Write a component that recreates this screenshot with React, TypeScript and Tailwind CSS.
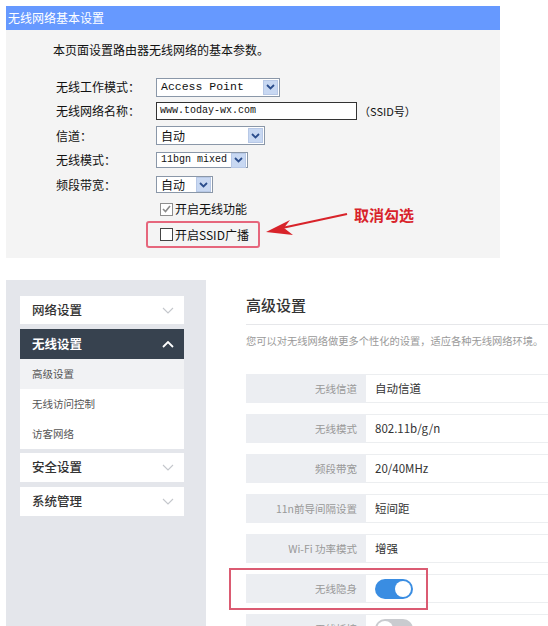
import React from "react";

const cjk = "font-['Noto_Sans_CJK_SC',sans-serif]";
const mono = "font-['Liberation_Mono','Noto_Sans_CJK_SC',monospace]";

function SelectArrow() {
  return (
    <span className="flex h-[15px] w-[15px] shrink-0 items-center justify-center border border-[#b7c8e6] bg-[#c8d8f2]">
      <svg width="9" height="6" viewBox="0 0 9 6">
        <polyline points="1,1 4.5,4.5 8,1" fill="none" stroke="#2b4d8c" strokeWidth="1.8" />
      </svg>
    </span>
  );
}

function OldSelect({ value, width, height, textClass }: { value: string; width: string; height: string; textClass: string }) {
  return (
    <div className={`${width} ${height} flex items-center justify-between border border-[#8a97a8] bg-white pl-[4px] pr-[1px]`}>
      <span className={`${textClass} whitespace-nowrap leading-none text-[#111]`}>{value}</span>
      <SelectArrow />
    </div>
  );
}

function OldCheckbox({ checked }: { checked?: boolean }) {
  return (
    <span className={`flex h-[13px] w-[13px] items-center justify-center border bg-white ${checked ? "border-[#8e8e8e]" : "border-[#444]"}`}>
      {checked && (
        <svg width="9" height="8" viewBox="0 0 9 8">
          <polyline points="1,4 3.5,6.5 8,1" fill="none" stroke="#8a8a8a" strokeWidth="1.6" />
        </svg>
      )}
    </span>
  );
}

function Chevron({ up, color }: { up?: boolean; color: string }) {
  return (
    <svg width="12" height="7" viewBox="0 0 12 7">
      <polyline points={up ? "1,6 6,1 11,6" : "1,1 6,6 11,1"} fill="none" stroke={color} strokeWidth={up ? 1.8 : 1.1} />
    </svg>
  );
}

function Toggle({ on }: { on?: boolean }) {
  return (
    <span className={`relative block h-[20px] w-[38px] rounded-full ${on ? "bg-[#3a8de2]" : "bg-[#c9cbcf]"}`}>
      <span className={`absolute top-[2px] h-[16px] w-[16px] rounded-full bg-white ${on ? "right-[2px]" : "left-[2px]"}`} />
    </span>
  );
}

const rows: { label: string; value?: string; toggle?: "on" | "off"; marked?: boolean }[] = [
  { label: "无线信道", value: "自动信道" },
  { label: "无线模式", value: "802.11b/g/n" },
  { label: "频段带宽", value: "20/40MHz" },
  { label: "11n前导间隔设置", value: "短间距" },
  { label: "Wi-Fi 功率模式", value: "增强" },
  { label: "无线隐身", toggle: "on", marked: true },
  { label: "无线桥接", toggle: "off" },
];

export default function App() {
  return (
    <div className={`relative h-[626px] w-[548px] overflow-hidden bg-white ${cjk}`}>
      {/* old style settings page */}
      <div className="pl-[6px] pt-[6px]">
        <div className="w-[494px]">
          <div className="flex h-[24px] items-center bg-[#6699ff] pl-[2px] text-[12px] text-white">无线网络基本设置</div>
          <div className="h-[228px] bg-[#f4f4f4] pt-[12px] text-[12px] text-[#111]">
            <p className="pl-[47px] leading-[16px]">本页面设置路由器无线网络的基本参数。</p>
            <div className="mt-[17px]">
              <div className="flex h-[24px] items-center pl-[50px]">
                <span className="w-[100px]">无线工作模式：</span>
                <OldSelect value="Access Point" width="w-[124px]" height="h-[19px]" textClass={`${mono} text-[11.5px]`} />
              </div>
              <div className="flex h-[24px] items-center pl-[50px]">
                <span className="w-[100px]">无线网络名称：</span>
                <div className="flex h-[18px] w-[201px] items-center border border-[#333] bg-white pl-[3px]">
                  <span className={`${mono} text-[10px] leading-none text-[#111]`}>www.today-wx.com</span>
                </div>
                <span className="ml-[2px] text-[11px]">（SSID号）</span>
              </div>
              <div className="flex h-[25px] items-center pl-[50px]">
                <span className="w-[100px]">信道：</span>
                <OldSelect value="自动" width="w-[109px]" height="h-[19px]" textClass={`${cjk} text-[12px]`} />
              </div>
              <div className="flex h-[24px] items-center pl-[50px]">
                <span className="w-[100px]">无线模式：</span>
                <OldSelect value="11bgn mixed" width="w-[92px]" height="h-[16px]" textClass={`${mono} text-[10px]`} />
              </div>
              <div className="flex h-[25px] items-center pl-[50px]">
                <span className="w-[100px]">频段带宽：</span>
                <OldSelect value="自动" width="w-[57px]" height="h-[17px]" textClass={`${cjk} text-[12px]`} />
              </div>
              <div className="flex h-[24px] items-center gap-[2px] pl-[154px]">
                <OldCheckbox checked />
                <span>开启无线功能</span>
              </div>
              <div className="ml-[140px] flex h-[27px] w-[114px] items-center gap-[2px] rounded-[3px] border-2 border-[#e6667c] pl-[12px]">
                <OldCheckbox />
                <span>开启SSID广播</span>
              </div>
            </div>
          </div>
        </div>
      </div>

      {/* annotation arrow */}
      <svg className="pointer-events-none absolute left-0 top-0" width="548" height="260" viewBox="0 0 548 260">
        <line x1="347" y1="214" x2="282" y2="228" stroke="#d8232a" strokeWidth="2.2" />
        <polygon points="266,232 290,220 284,228 293,235" fill="#d8232a" />
      </svg>
      <span className="absolute left-[354px] top-[204px] text-[15px] font-bold leading-[22px] text-[#d8232a]">取消勾选</span>

      {/* new style settings page */}
      <div className="mt-[22px] flex pl-[6px]">
        <div className="h-[346px] w-[200px] shrink-0 bg-[#e4e6eb] pl-[14px] pr-[22px] pt-[16px]">
          <div className="flex h-[28px] items-center justify-between bg-white pl-[12px] pr-[10px] text-[12.5px] font-medium text-[#333]">
            <span>网络设置</span>
            <Chevron color="#c4c7cc" />
          </div>
          <div className="mt-[5px] flex h-[30px] items-center justify-between bg-[#37424f] pl-[12px] pr-[10px] text-[12.5px] font-bold text-white">
            <span>无线设置</span>
            <Chevron up color="#ffffff" />
          </div>
          <div className="bg-white text-[10.5px] text-[#555]">
            <div className="flex h-[30px] items-center bg-[#f1f2f4] pl-[12px]">高级设置</div>
            <div className="flex h-[30px] items-center pl-[12px]">无线访问控制</div>
            <div className="flex h-[30px] items-center pl-[12px]">访客网络</div>
          </div>
          <div className="mt-[4px] flex h-[29px] items-center justify-between bg-white pl-[12px] pr-[10px] text-[12.5px] font-medium text-[#333]">
            <span>安全设置</span>
            <Chevron color="#c4c7cc" />
          </div>
          <div className="mt-[5px] flex h-[29px] items-center justify-between bg-white pl-[12px] pr-[10px] text-[12.5px] font-medium text-[#333]">
            <span>系统管理</span>
            <Chevron color="#c4c7cc" />
          </div>
        </div>

        <div className="ml-[40px] w-[340px] shrink-0">
          <div className="border-b border-[#e6e7ea] pb-[9px] pt-[15px]">
            <h1 className="text-[15px] font-medium leading-[20px] text-[#333]">高级设置</h1>
          </div>
          <p className="mt-[9px] whitespace-nowrap text-[10.25px] leading-[14px] text-[#9a9a9a]">
            您可以对无线网络做更多个性化的设置，适应各种无线网络环境。
          </p>
          <div className="mt-[26px]">
            {rows.map((r) => (
              <div key={r.label} className="relative mb-[11px] flex h-[29px]">
                <div className="flex w-[120px] shrink-0 items-center justify-end bg-[#eceef2] pr-[9px] text-[10.5px] text-[#999]">
                  {r.label}
                </div>
                <div className="flex flex-1 items-center border border-l-0 border-[#eceef0] pl-[9px] text-[11.5px] text-[#333]">
                  {r.toggle ? <Toggle on={r.toggle === "on"} /> : r.value}
                </div>
                {r.marked && (
                  <span className="pointer-events-none absolute left-[-17px] top-[-6px] h-[42px] w-[199px] border-2 border-[#db5b72]" />
                )}
              </div>
            ))}
          </div>
        </div>
      </div>
    </div>
  );
}
